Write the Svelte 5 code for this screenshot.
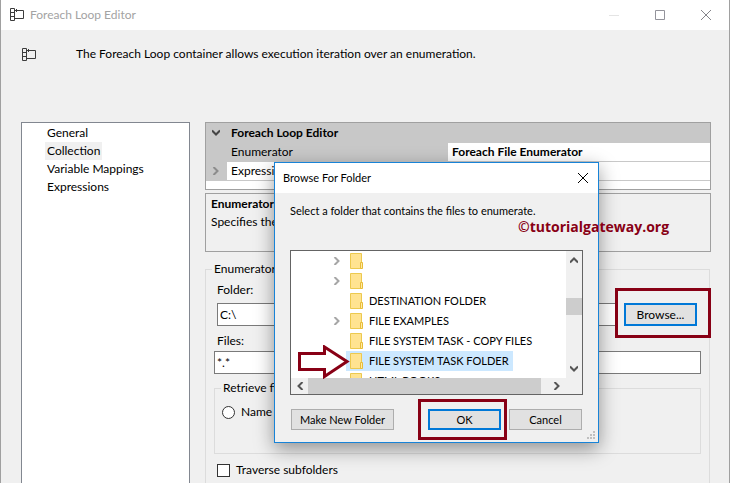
<script lang="ts">
    const pages = ['General', 'Collection', 'Variable Mappings', 'Expressions'];

    const folders = [
        { name: '', expandable: true },
        { name: '', expandable: true },
        { name: 'DESTINATION FOLDER', expandable: false },
        { name: 'FILE EXAMPLES', expandable: true },
        { name: 'FILE SYSTEM TASK - COPY FILES', expandable: false },
        { name: 'FILE SYSTEM TASK FOLDER', expandable: false },
        { name: 'HTML BOOKS', expandable: false }
    ];

    let page = $state('Collection');
    let selected = $state(5);
    let folder = $state('C:\\');
    let files = $state('*.*');
    let nameMode = $state('');
    let traverse = $state(false);
</script>

{#snippet loopIcon()}
    <svg class="loop" width="14" height="13" viewBox="0 0 14 13" fill="none" stroke="#3c3c3c" aria-hidden="true">
        <path d="M.5.5h4v12h-4zM.5 4.5h4M.5 8.5h4M4.5 2.5h9v8h-9M6.5 1v3" />
    </svg>
{/snippet}

{#snippet chevron(dir: string, color: string)}
    <svg class="chevron {dir}" width="8" height="8" viewBox="0 0 8 8" fill="none" stroke={color} stroke-width="2" aria-hidden="true">
        <path d="M1.500 0 5.500 4 1.500 8" />
    </svg>
{/snippet}

{#snippet cross(color: string)}
    <svg width="10" height="10" viewBox="0 0 10 10" stroke={color} aria-hidden="true">
        <path d="M0 0 10 10M10 0 0 10" />
    </svg>
{/snippet}

<div class="window">
    <header class="titlebar">
        {@render loopIcon()}
        <span class="title">Foreach Loop Editor</span>
        <div class="controls">
            <button aria-label="Minimize">
                <svg width="10" height="10" viewBox="0 0 10 10" stroke="#e4e4e4"><path d="M0 5.500h10" /></svg>
            </button>
            <button aria-label="Maximize">
                <svg width="10" height="10" viewBox="0 0 10 10" fill="none" stroke="#93939b"><path d="M.5.5h9v9h-9z" /></svg>
            </button>
            <button aria-label="Close">{@render cross('#85858a')}</button>
        </div>
    </header>

    <div class="intro">
        {@render loopIcon()}
        <p>The Foreach Loop container allows execution iteration over an enumeration.</p>
    </div>

    <div class="body">
        <nav class="pages">
            {#each pages as item}
                <button class:active={page === item} onclick={() => (page = item)}>{item}</button>
            {/each}
        </nav>

        <main>
            <div class="props">
                <table>
                    <colgroup><col class="gutter" /><col class="key" /><col /></colgroup>
                    <tbody>
                        <tr class="group">
                            <td>{@render chevron('down', '#444')}</td>
                            <th colspan="2">Foreach Loop Editor</th>
                        </tr>
                        <tr class="current">
                            <td></td>
                            <td>Enumerator</td>
                            <td><b>Foreach File Enumerator</b></td>
                        </tr>
                        <tr>
                            <td>{@render chevron('right', '#8c8c8c')}</td>
                            <td>Expressions</td>
                            <td></td>
                        </tr>
                    </tbody>
                </table>
            </div>

            <div class="help">
                <b>Enumerator</b>
                <p>Specifies the enumerator type.</p>
            </div>

            <fieldset class="config">
                <legend>Enumerator configuration</legend>
                <label class="caption" for="folder">Folder:</label>
                <div class="folder-row">
                    <input id="folder" type="text" bind:value={folder} />
                    <span class="mark browse-mark"><button class="btn default">Browse...</button></span>
                </div>
                <label class="caption files" for="files">Files:</label>
                <input id="files" type="text" bind:value={files} />

                <fieldset class="retrieve">
                    <legend>Retrieve file name</legend>
                    <label class="check">
                        <input type="radio" value="name" bind:group={nameMode} />
                        Name
                    </label>
                </fieldset>

                <label class="check traverse">
                    <input type="checkbox" bind:checked={traverse} />
                    Traverse subfolders
                </label>
            </fieldset>
        </main>
    </div>

    <div class="dialog" role="dialog" aria-labelledby="dialog-title">
        <header>
            <span id="dialog-title">Browse For Folder</span>
            <button aria-label="Close">{@render cross('#000')}</button>
        </header>
        <div class="content">
            <p>Select a folder that contains the files to enumerate.</p>
            <div class="tree">
                <div class="rows">
                    {#each folders as item, i}
                        <div class="row">
                            <span class="twisty">
                                {#if item.expandable}{@render chevron('right', '#a6a6a6')}{/if}
                            </span>
                            <button class:selected={selected === i} aria-label={item.name || 'Folder'} onclick={() => (selected = i)}>
                                <svg width="13" height="16" viewBox="0 0 13 16" aria-hidden="true">
                                    <path d="M.5.5h11v15H.5z" fill="#ffe391" stroke="#ecc94f" />
                                    <path d="M10.500 9.500h2v6h-2z" fill="#ffe9a6" stroke="#e8bd37" />
                                </svg>
                                {item.name}
                            </button>
                        </div>
                    {/each}
                </div>
                <div class="vbar">
                    {@render chevron('up', '#555')}
                    <i></i>
                    {@render chevron('down', '#555')}
                </div>
                <div class="hbar">
                    {@render chevron('left', '#555')}
                    <i></i>
                    {@render chevron('right', '#555')}
                </div>
            </div>
            <footer>
                <button class="btn new">Make New Folder</button>
                <span class="mark ok-mark"><button class="btn default">OK</button></span>
                <button class="btn">Cancel</button>
            </footer>
        </div>
        <svg class="grip" width="8" height="8" viewBox="0 0 8 8" fill="#bfbfbf" aria-hidden="true">
            <path d="M6 0h2v2H6zM3 3h2v2H3zM6 3h2v2H6zM0 6h2v2H0zM3 6h2v2H3zM6 6h2v2H6z" />
        </svg>
        <svg class="pointer" width="52" height="34" viewBox="0 0 52 34" fill="none" stroke="#880015" stroke-width="3" aria-hidden="true">
            <path d="M1.500 8.500H26.500V2L49 16.500 26.500 31.500V24.500H1.500Z" />
        </svg>
    </div>

    <span class="watermark">©tutorialgateway.org</span>
</div>

<style>
    :global(body) {
        margin: 0;
        background: #f0f0f0;
    }
    .window {
        position: relative;
        display: flex;
        flex-direction: column;
        height: 100vh;
        box-sizing: border-box;
        overflow: hidden;
        border: solid #a0a0a0;
        border-width: 0 1px;
        background: #f0f0f0;
        color: #000;
        font: 12px/18px Lato, "Open Sans", sans-serif;
    }
    p { margin: 0; }
    svg { display: block; flex: none; }
    button, input {
        font: inherit;
        color: inherit;
        box-sizing: border-box;
    }
    button {
        border: 0;
        padding: 0;
        background: none;
        white-space: nowrap;
    }

    .titlebar {
        display: flex;
        align-items: center;
        flex: none;
        height: 30px;
        padding-left: 9px;
        gap: 6px;
        background: #fff;
        color: #a3a3a3;
    }
    .titlebar .loop { margin-top: -2px; }
    .controls {
        display: flex;
        margin-left: auto;
    }
    .controls button {
        display: grid;
        place-items: center;
        width: 46px;
        height: 30px;
    }

    .intro {
        display: flex;
        align-items: center;
        gap: 40px;
        padding: 15px 21px 59px;
    }

    .body {
        display: flex;
        flex: 1;
        gap: 15px;
        padding: 0 18px 0 20px;
    }
    .pages {
        box-sizing: border-box;
        display: flex;
        flex-direction: column;
        align-items: flex-start;
        flex: none;
        width: 169px;
        padding: 1px 0 0 23px;
        border: 1px solid #828790;
        border-bottom: 0;
        background: #fff;
    }
    .pages button {
        height: 18px;
        padding: 0 2px;
    }
    .pages .active { background: #f0f0f0; }

    main {
        display: flex;
        flex-direction: column;
        flex: 1;
        min-width: 0;
    }
    .props {
        padding-bottom: 8px;
        border: 1px solid #a0a0a0;
        background: #fff;
    }
    table {
        width: 100%;
        table-layout: fixed;
        border-spacing: 0;
    }
    .gutter { width: 21px; }
    .key { width: 221px; }
    td, th {
        box-sizing: border-box;
        height: 19px;
        padding: 0 4px;
        border-bottom: 1px solid #c8c8c8;
        text-align: left;
    }
    .group td, .group th { height: 20px; }
    td:first-child, .group th, .current td:nth-child(2) { background: #c8c8c8; }
    td:first-child { padding-left: 6px; }
    .help {
        box-sizing: border-box;
        min-height: 59px;
        margin: 3px 0 8px;
        padding: 1px 5px;
        border: 1px solid #a0a0a0;
    }

    fieldset {
        min-width: 0;
        margin: 0;
        padding: 0 8px;
        border: 1px solid #dcdcdc;
    }
    legend {
        margin-left: -2px;
        padding: 0 2px;
    }
    .config {
        flex: 1;
        margin-right: 1px;
        border-bottom: 0;
    }
    .caption {
        display: block;
        margin: 3px 0 4px 3px;
    }
    .files { margin: 6px 0 1px 3px; }
    input[type="text"] {
        height: 23px;
        padding: 0 2px;
        border: 1px solid #7a7a7a;
        background: #fff;
    }
    #files {
        display: block;
        width: 100%;
    }
    .folder-row {
        display: flex;
        gap: 8px;
        padding: 0 4px 0 3px;
    }
    .folder-row input {
        flex: 1;
        min-width: 0;
    }
    .btn {
        width: 73px;
        height: 21px;
        border: 1px solid #adadad;
        background: #e1e1e1;
        line-height: 18px;
    }
    .default { border: 2px solid #0078d7; }
    .folder-row .btn { height: 23px; }

    /* dark red frame drawn around a highlighted button */
    .mark {
        position: relative;
        display: flex;
    }
    .mark::after {
        content: "";
        position: absolute;
        border: 3px solid #880015;
        pointer-events: none;
    }
    .browse-mark::after { inset: -15px -14px -12px -9px; }
    .ok-mark::after { inset: -10px -6px; left: -10px; }

    .retrieve {
        box-sizing: border-box;
        height: 75px;
        margin-top: 5px;
        padding-left: 7px;
    }
    .retrieve legend { margin-left: -1px; }
    .check {
        display: flex;
        align-items: center;
        gap: 6px;
    }
    .retrieve .check { margin-top: 6px; }
    .traverse { margin: 7px 0 0 3px; }
    .check input {
        appearance: none;
        width: 13px;
        height: 13px;
        margin: 0;
        border: 1px solid #333;
        background: #fff;
    }
    .check input[type="radio"] { border-radius: 50%; }
    .check input:checked { box-shadow: inset 0 0 0 2px #fff; background: #333; }

    .dialog {
        position: absolute;
        top: 162px;
        left: 273px;
        box-sizing: border-box;
        width: 325px;
        border: 1px solid #1883d7;
        background: #f0f0f0;
        box-shadow: 0 6px 18px rgba(0, 0, 0, 0.4);
        font-size: 11px;
    }
    .dialog header {
        display: flex;
        align-items: center;
        justify-content: space-between;
        height: 30px;
        padding: 0 10px 0 8px;
        background: #fff;
    }
    .content { padding: 9px 15px 12px; }
    .tree {
        display: grid;
        grid-template: 127px 16px / 1fr 16px;
        margin: 30px 0 14px;
        border: 1px solid #646464;
        background: #f0f0f0;
    }
    .rows {
        overflow: hidden;
        background: #fff;
    }
    .row {
        display: flex;
        height: 20px;
    }
    .twisty {
        display: flex;
        align-items: center;
        width: 55px;
        padding-left: 42px;
        box-sizing: border-box;
    }
    .row button {
        display: flex;
        align-items: center;
        gap: 6px;
        padding: 0 4px;
    }
    .row .selected { background: #cce8ff; }
    .vbar, .hbar {
        display: flex;
        align-items: center;
        justify-content: space-between;
    }
    .vbar {
        flex-direction: column;
        padding: 5px 0;
    }
    .hbar { padding: 0 5px; }
    .vbar i {
        width: 16px;
        height: 17px;
        margin-bottom: 16px;
        background: #cdcdcd;
    }
    .hbar i {
        flex: 1;
        height: 16px;
        margin: 0 12px 0 4px;
        background: #cdcdcd;
    }
    .down { transform: rotate(90deg); }
    .left { transform: rotate(180deg); }
    .up { transform: rotate(270deg); }
    footer {
        display: flex;
        gap: 8px;
        padding: 0 1px;
    }
    .new {
        width: 103px;
        margin-right: auto;
    }
    .grip {
        position: absolute;
        right: 3px;
        bottom: 3px;
    }
    .pointer {
        position: absolute;
        top: 182px;
        left: 23px;
    }
    .watermark {
        position: absolute;
        top: 218px;
        left: 517px;
        color: #880015;
        font: bold 14px/18px "Open Sans", sans-serif;
    }
</style>
